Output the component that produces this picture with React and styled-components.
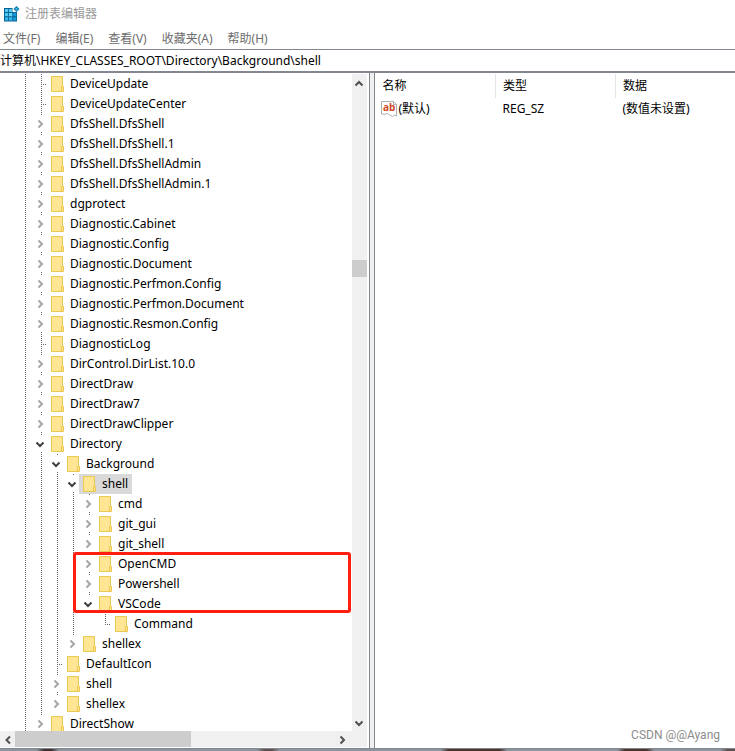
import { useState } from "react";
import styled, { createGlobalStyle, css } from "styled-components";

const leaf = (name) => ({ name });
const closed = (name) => ({ name, children: [] });
const opened = (name, children, extra) => ({
  name,
  open: true,
  children,
  ...extra,
});

const keys = [
  leaf("DeviceUpdate"),
  leaf("DeviceUpdateCenter"),
  closed("DfsShell.DfsShell"),
  closed("DfsShell.DfsShell.1"),
  closed("DfsShell.DfsShellAdmin"),
  closed("DfsShell.DfsShellAdmin.1"),
  closed("dgprotect"),
  closed("Diagnostic.Cabinet"),
  closed("Diagnostic.Config"),
  closed("Diagnostic.Document"),
  closed("Diagnostic.Perfmon.Config"),
  closed("Diagnostic.Perfmon.Document"),
  closed("Diagnostic.Resmon.Config"),
  leaf("DiagnosticLog"),
  closed("DirControl.DirList.10.0"),
  closed("DirectDraw"),
  closed("DirectDraw7"),
  closed("DirectDrawClipper"),
  opened("Directory", [
    opened("Background", [
      opened(
        "shell",
        [
          closed("cmd"),
          closed("git_gui"),
          closed("git_shell"),
          closed("OpenCMD"),
          closed("Powershell"),
          opened("VSCode", [leaf("Command")]),
        ],
        { selected: true }
      ),
      closed("shellex"),
    ]),
    leaf("DefaultIcon"),
    closed("shell"),
    closed("shellex"),
  ]),
  closed("DirectShow"),
];

const menus = ["文件(F)", "编辑(E)", "查看(V)", "收藏夹(A)", "帮助(H)"];

const chevrons = {
  up: "M1.500 7.500 5 4l3.500 3.500",
  down: "M1.500 3.500 5 7l3.500-3.500",
  left: "M7 1.500 3.500 5 7 8.500",
  right: "M3.500 1.500 7 5 3.500 8.500",
};

const Chevron = ({ to, color = "#505050" }) => (
  <svg width="10" height="10" viewBox="0 0 10 10" aria-hidden="true">
    <path d={chevrons[to]} fill="none" stroke={color} strokeWidth="2" />
  </svg>
);

const FolderIcon = () => (
  <svg width="13" height="16" viewBox="0 0 13 16" aria-hidden="true">
    <path d="M.5.5h11v10h1v5H.5z" fill="#ffe694" stroke="#ebc850" />
    <path d="M10.500 15V10.500h1" fill="none" stroke="#ebc850" />
  </svg>
);

const RegeditIcon = () => (
  <svg width="17" height="16" viewBox="0 0 17 16" aria-hidden="true">
    <path d="M1 2h8.500v4H14v9.500H1z" fill="#07628f" />
    <path d="M2 3h3.200v3H2zM6 3h3v3H6zM2 7h3.200v3.300H2z" fill="#4fcaf5" />
    <path d="M6 7h3.300v3.300H6z" fill="#5fd6fb" />
    <path d="M2 11.300h3.200v3.200H2zM6 11.300h3.300v3.200H6z" fill="#34b8ee" />
    <path d="M10.200 7h3v3.300h-3zM10.200 11.300h3v3.200h-3z" fill="#129bdb" />
    <path d="M13.500 0l3 3-3 3-3-3z" fill="#0c78ab" />
    <path d="M13.500 1.500 15 3l-1.500 1.500L12 3z" fill="#3fbdee" />
  </svg>
);

const StringIcon = () => (
  <svg width="16" height="16" viewBox="0 0 16 16" aria-hidden="true">
    <path
      d="M.5.5h12l3 3v11.500l-2-.8-2 1.300-3-1.500-2-1.500-2.500.8-3.500-.3z"
      fill="#fdfdfd"
      stroke="#b0b0b0"
    />
    <path d="M12.500.5v3h3" fill="none" stroke="#b0b0b0" />
    <text
      x="2"
      y="10"
      fill="#d24726"
      fontFamily="Open Sans, sans-serif"
      fontSize="10"
      fontWeight="700"
    >
      ab
    </text>
  </svg>
);

const TreeItem = ({ item, guides, last }) => {
  const [open, setOpen] = useState(Boolean(item.open));

  return (
    <li>
      <Row>
        {guides.map((on, i) => (
          <Guide key={i} $line={on ? "full" : "none"} />
        ))}
        {item.children ? (
          <Guide $line={last ? "top" : "gap"}>
            <Toggle
              aria-label={item.name}
              aria-expanded={open}
              onClick={() => setOpen(!open)}
            >
              {open ? (
                <Chevron to="down" color="#404040" />
              ) : (
                <Chevron to="right" color="#a6a6a6" />
              )}
            </Toggle>
          </Guide>
        ) : (
          <Guide $line={last ? "half" : "full"} $branch />
        )}
        <Key $selected={item.selected}>
          <FolderIcon />
          {item.name}
        </Key>
      </Row>
      {open && item.children && (
        <Branch items={item.children} guides={[...guides, !last]} />
      )}
    </li>
  );
};

const Branch = ({ items, guides }) => (
  <List>
    {items.map((item, i) => (
      <TreeItem
        key={item.name}
        item={item}
        guides={guides}
        last={i === items.length - 1}
      />
    ))}
  </List>
);

export default function App() {
  return (
    <Window>
      <GlobalStyle />
      <TitleBar>
        <RegeditIcon />
        <Title>注册表编辑器</Title>
      </TitleBar>
      <MenuBar>
        {menus.map((label) => (
          <MenuButton key={label}>{label}</MenuButton>
        ))}
      </MenuBar>
      <Address
        aria-label="地址"
        defaultValue="计算机\HKEY_CLASSES_ROOT\Directory\Background\shell"
      />
      <Panes>
        <TreePane>
          <TreeArea>
            <Branch items={keys} guides={[true]} />
            <Highlight />
          </TreeArea>
          <ScrollColumn>
            <ScrollButton aria-label="up">
              <Chevron to="up" />
            </ScrollButton>
            <ThumbY />
            <ScrollButton aria-label="down">
              <Chevron to="down" />
            </ScrollButton>
          </ScrollColumn>
          <ScrollRow>
            <ScrollButton aria-label="left">
              <Chevron to="left" />
            </ScrollButton>
            <ThumbX />
            <ScrollButton aria-label="right">
              <Chevron to="right" />
            </ScrollButton>
          </ScrollRow>
        </TreePane>
        <Splitter />
        <ValuePane>
          <Table>
            <thead>
              <tr>
                <HeadCell $width="120px">名称</HeadCell>
                <HeadCell $width="120px">类型</HeadCell>
                <HeadCell>数据</HeadCell>
              </tr>
            </thead>
            <tbody>
              <tr>
                <NameCell>
                  <ValueName>
                    <StringIcon />
                    (默认)
                  </ValueName>
                </NameCell>
                <Cell>REG_SZ</Cell>
                <Cell>(数值未设置)</Cell>
              </tr>
            </tbody>
          </Table>
          <Watermark>CSDN @@Ayang</Watermark>
        </ValuePane>
      </Panes>
      <Edge />
    </Window>
  );
}

const GlobalStyle = createGlobalStyle`
  * {
    box-sizing: border-box;
  }

  body {
    margin: 0;
    background: #fff;
  }

  body, button, input {
    font-family: "Noto Sans", "Noto Sans CJK SC", sans-serif;
    font-size: 12px;
    line-height: 20px;
    color: #000;
  }

  button {
    border: 0;
    padding: 0;
    background: none;
  }

  svg {
    display: block;
    flex: none;
  }
`;

const dots = "repeating-linear-gradient(#666 0 1px, transparent 1px 2px)";

const Window = styled.div`
  display: flex;
  flex-direction: column;
  height: 100vh;
  overflow: hidden;
`;

const TitleBar = styled.header`
  display: flex;
  align-items: center;
  gap: 5px;
  height: 28px;
  padding-left: 3px;
`;

const Title = styled.span`
  color: #999;
`;

const MenuBar = styled.nav`
  display: flex;
  gap: 15px;
  height: 21px;
  padding-left: 3px;
`;

const MenuButton = styled.button`
  color: #6d6d6d;
  white-space: nowrap;
`;

const Address = styled.input`
  width: 100%;
  height: 24px;
  padding: 0 0 2px;
  border: solid #828790;
  border-width: 1px 0 2px;
  outline: 0;
`;

const Panes = styled.main`
  display: flex;
  flex: 1;
  min-height: 0;
`;

const TreePane = styled.section`
  display: grid;
  grid-template-columns: minmax(0, 1fr) 15px;
  grid-template-rows: minmax(0, 1fr) 16px;
  flex: 0 0 50%;
  padding: 1px 1px 1px 0;
`;

const TreeArea = styled.div`
  position: relative;
  overflow: hidden;
`;

const List = styled.ul`
  margin: 0;
  padding: 0;
  list-style: none;
`;

const Row = styled.div`
  display: flex;
  height: 20px;
  padding-left: 15px;
`;

const guideLines = {
  none: "none",
  full: `${dots} 10px 0 / 1px 20px no-repeat`,
  half: `${dots} 10px 0 / 1px 11px no-repeat`,
  top: `${dots} 10px 0 / 1px 2px no-repeat`,
  gap: `${dots} 10px 0 / 1px 2px no-repeat, ${dots} 10px 18px / 1px 2px no-repeat`,
};

const Guide = styled.span`
  display: flex;
  flex: none;
  align-items: center;
  width: 16px;
  background: ${(p) => guideLines[p.$line]};

  ${(p) =>
    p.$branch &&
    css`
      &::after {
        content: "";
        width: 6px;
        height: 1px;
        margin-left: 10px;
        background: repeating-linear-gradient(
          90deg,
          #666 0 1px,
          transparent 1px 2px
        );
      }
    `}
`;

const Toggle = styled.button`
  margin-left: 4px;
`;

const Key = styled.span`
  display: flex;
  align-items: center;
  gap: 6px;
  padding: 0 4px;
  white-space: nowrap;
  background: ${(p) => (p.$selected ? "#d9d9d9" : "none")};
`;

const Highlight = styled.div`
  position: absolute;
  top: 478px;
  left: 73px;
  right: 1px;
  height: 61px;
  border: 3px solid #ff1e10;
  border-radius: 3px;
  pointer-events: none;
`;

const ScrollColumn = styled.div`
  display: flex;
  flex-direction: column;
  background: #f0f0f0;
`;

const ScrollRow = styled.div`
  display: flex;
  grid-column: 1 / -1;
  padding-right: 17px;
  background: #f0f0f0;
`;

const ScrollButton = styled.button`
  display: grid;
  flex: none;
  place-items: center;
  width: 15px;
  height: 17px;
`;

const ThumbY = styled.div`
  height: 17px;
  margin: 169px 0 auto;
  background: #cdcdcd;
`;

const ThumbX = styled.div`
  width: 176px;
  margin-right: auto;
  background: #cdcdcd;
`;

const Splitter = styled.div`
  flex: none;
  width: 6px;
  margin-left: 1px;
  border: solid #828790;
  border-width: 0 1px;
  background: #f0f0f0;
`;

const ValuePane = styled.section`
  position: relative;
  flex: 1;
  min-width: 0;
  padding: 1px 0 0 1px;
`;

const Table = styled.table`
  width: 100%;
  border-collapse: collapse;
  table-layout: fixed;
`;

const Cell = styled.td`
  height: 22px;
  padding: 0 0 0 7px;
`;

const NameCell = styled(Cell)`
  padding-left: 5px;
`;

const HeadCell = styled.th`
  width: ${(p) => p.$width || "auto"};
  height: 24px;
  padding: 0 0 0 7px;
  font-weight: 400;
  text-align: left;

  & + & {
    border-left: 1px solid #e5e5e5;
  }
`;

const ValueName = styled.span`
  display: flex;
  align-items: center;
  gap: 2px;
`;

const Watermark = styled.span`
  position: absolute;
  right: 15px;
  bottom: 3px;
  color: #8c8c8c;
  font-family: Roboto, sans-serif;
`;

const Edge = styled.footer`
  height: 3px;
  background: linear-gradient(#828790 0 1px, transparent 1px),
    linear-gradient(
      90deg,
      #8b959f 5%,
      #3d2f2e 6% 7%,
      #8b959f 8% 35%,
      #5d5050 36% 37%,
      #8b959f 38% 60%,
      #4a342c 61% 68%,
      #8b959f 69% 84%,
      #4a342c 85% 88%,
      #8b959f 89% 98%,
      #5d5050 99%
    );
`;
